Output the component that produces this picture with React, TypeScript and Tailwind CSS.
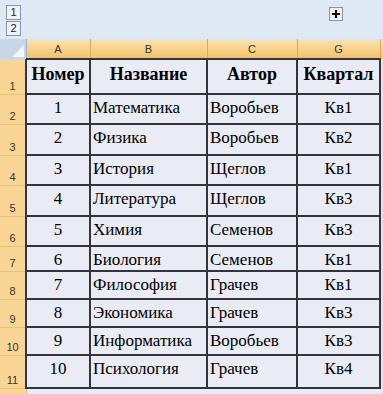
import React from 'react';

const rows = [
  { h: 30, n: '1', name: 'Математика', author: 'Воробьев', q: 'Кв1' },
  { h: 31, n: '2', name: 'Физика', author: 'Воробьев', q: 'Кв2' },
  { h: 30, n: '3', name: 'История', author: 'Щеглов', q: 'Кв1' },
  { h: 31, n: '4', name: 'Литература', author: 'Щеглов', q: 'Кв3' },
  { h: 30, n: '5', name: 'Химия', author: 'Семенов', q: 'Кв3' },
  { h: 25, n: '6', name: 'Биология', author: 'Семенов', q: 'Кв1' },
  { h: 28, n: '7', name: 'Философия', author: 'Грачев', q: 'Кв1' },
  { h: 28, n: '8', name: 'Экономика', author: 'Грачев', q: 'Кв3' },
  { h: 28, n: '9', name: 'Информатика', author: 'Воробьев', q: 'Кв3' },
  { h: 33, n: '10', name: 'Психология', author: 'Грачев', q: 'Кв4' },
];

const cell = 'border-2 border-[#34343e] bg-[#e9ebf5] align-top pt-[3px] px-[2px] leading-[20px] text-[17px] text-black';
const head = 'border-2 border-[#34343e] bg-[#e9ebf5] align-top pt-[3px] px-[1px] leading-[22px] text-[18px] text-black text-center font-bold whitespace-nowrap';
const rowHead = 'bg-[#f9d696] border-b border-r border-[#e6c17c] text-[11px] text-[#3c3420] text-center align-bottom pb-[1px] leading-[14px]';
const colHead = 'bg-gradient-to-b from-[#fbe3b3] to-[#f2c266] border-r border-[#d9ab58] text-[11px] text-[#3c3420] text-center font-normal leading-[18px]';
const sans = { fontFamily: '"Liberation Sans", Arial, sans-serif' };

export default function App() {
  return (
    <div className="w-[383px] h-[394px] overflow-hidden bg-[#dfe9f5]" style={{ fontFamily: '"Liberation Serif", "Times New Roman", serif' }}>
      {/* outline bar */}
      <div className="relative h-[39px] bg-[#dfe9f5]">
        <div className="absolute left-[6px] top-[5px] flex flex-col gap-[1px]" style={sans}>
          <div className="w-[15px] h-[15px] border border-[#8696ad] bg-[#eef3fa] text-[11px] leading-[13px] text-center text-[#222]">1</div>
          <div className="w-[15px] h-[15px] border border-[#8696ad] bg-[#eef3fa] text-[11px] leading-[13px] text-center text-[#222]">2</div>
        </div>
        <div className="absolute left-[329px] top-[7px] w-[14px] h-[14px] border border-[#8a93a3] bg-[#eef3fa] flex items-center justify-center">
          <svg width="8" height="8" viewBox="0 0 8 8">
            <rect x="3" y="0" width="2" height="8" fill="#111" />
            <rect x="0" y="3" width="8" height="2" fill="#111" />
          </svg>
        </div>
      </div>

      <table className="table-fixed border-collapse" style={{ width: 386 }}>
        <colgroup>
          <col style={{ width: 26 }} />
          <col style={{ width: 64 }} />
          <col style={{ width: 117 }} />
          <col style={{ width: 90 }} />
          <col style={{ width: 83 }} />
          <col style={{ width: 6 }} />
        </colgroup>
        <thead style={sans}>
          <tr className="h-[20px]">
            <th className="relative bg-[#c8d6ea] border-r border-[#9fb1ca] p-0">
              <svg className="absolute right-[2px] bottom-[2px]" width="12" height="12" viewBox="0 0 12 12">
                <polygon points="12,0 12,12 0,12" fill="#f4f7fc" />
              </svg>
            </th>
            <th className={colHead}>A</th>
            <th className={colHead}>B</th>
            <th className={colHead}>C</th>
            <th className={colHead}>G</th>
            <th className={colHead}></th>
          </tr>
        </thead>
        <tbody>
          <tr style={{ height: 35 }}>
            <td className={rowHead} style={sans}>1</td>
            <td className={head}>Номер</td>
            <td className={head}>Название</td>
            <td className={head}>Автор</td>
            <td className={head}>Квартал</td>
            <td className="bg-[#e3e6ee]"></td>
          </tr>
          {rows.map((r, i) => (
            <tr key={i} style={{ height: r.h }}>
              <td className={rowHead} style={sans}>{i + 2}</td>
              <td className={`${cell} text-center`}>{r.n}</td>
              <td className={`${cell} whitespace-nowrap`}>{r.name}</td>
              <td className={`${cell} whitespace-nowrap`}>{r.author}</td>
              <td className={`${cell} text-center`}>{r.q}</td>
              <td className="bg-[#e3e6ee]"></td>
            </tr>
          ))}
          <tr style={{ height: 20 }}>
            <td className={rowHead}></td>
            <td className="bg-[#e9ebf5]"></td>
            <td className="bg-[#e9ebf5]"></td>
            <td className="bg-[#e9ebf5]"></td>
            <td className="bg-[#e9ebf5]"></td>
            <td className="bg-[#e3e6ee]"></td>
          </tr>
        </tbody>
      </table>
    </div>
  );
}
